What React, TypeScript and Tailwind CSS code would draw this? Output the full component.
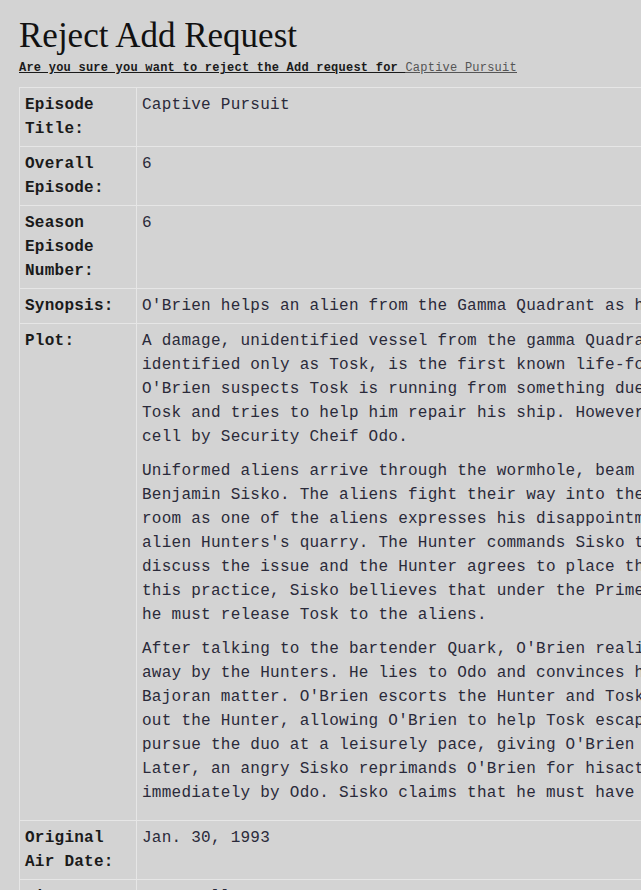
import React from "react";

const mono = { fontFamily: '"Liberation Mono", "DejaVu Sans Mono", monospace' };

const plot: string[][] = [
  [
    "A damage, unidentified vessel from the gamma Quadrant comes through the wormhole. Its pilot,",
    "identified only as Tosk, is the first known life-form to visit from the Gamma Quadrant. Chief",
    "O'Brien suspects Tosk is running from something due to his evasiveness. O'Brien befriends",
    "Tosk and tries to help him repair his ship. However, Tosk is caught and placed in a holding",
    "cell by Security Cheif Odo.",
  ],
  [
    "Uniformed aliens arrive through the wormhole, beam aboard the station and confront Commander",
    "Benjamin Sisko. The aliens fight their way into the security office and reach the holding",
    "room as one of the aliens expresses his disappointment that Tosk was caught. Tosk is the",
    "alien Hunters's quarry. The Hunter commands Sisko to return Tosk. Sisko and the Hunter",
    "discuss the issue and the Hunter agrees to place the matter in Sisko's hands. Despite hating",
    "this practice, Sisko bellieves that under the Prime Directive he cannot interfere and that",
    "he must release Tosk to the aliens.",
  ],
  [
    "After talking to the bartender Quark, O'Brien realizes that Tosk does not wish to be taken",
    "away by the Hunters. He lies to Odo and convinces him that the Hunters' presence is a",
    "Bajoran matter. O'Brien escorts the Hunter and Tosk to the docking ring, where he knocks",
    "out the Hunter, allowing O'Brien to help Tosk escape. The remaining Hunters then decide to",
    "pursue the duo at a leisurely pace, giving O'Brien time to get Tosk back to his ship.",
    "Later, an angry Sisko reprimands O'Brien for hisactions, while the Hunter is escorted away",
    "immediately by Odo. Sisko claims that he must have a word with O'Brien about the matter.",
  ],
];

function Row({ label, children }: { label: string; children: React.ReactNode }) {
  return (
    <tr>
      <th className="border border-[#e6e6e6] px-[5px] py-[5px] text-left align-top font-bold text-[#1a1a1a] w-[117px]">
        {label}
      </th>
      <td className="border border-[#e6e6e6] px-[5px] py-[5px] text-left align-top text-[#2a2a3a] whitespace-nowrap">
        {children}
      </td>
    </tr>
  );
}

export default function App() {
  return (
    <div className="min-h-screen w-full overflow-hidden bg-[#d3d3d3]">
      <div className="pl-[19px] pt-[14px]">
        <h1
          className="text-[35px] leading-[44px] text-[#111]"
          style={{ fontFamily: '"Liberation Serif", serif' }}
        >
          Reject Add Request
        </h1>
        <p
          className="mt-[2px] text-[12px] leading-[16px] font-bold tracking-[0.23px] text-[#1a1a1a] underline"
          style={mono}
        >
          Are you sure you want to reject the Add request for{" "}
          <a className="font-normal text-[#555] underline">Captive Pursuit</a>
        </p>
        <table
          className="mt-[11px] w-[1120px] border-collapse text-[16px] leading-[24px] tracking-[0.25px]"
          style={mono}
        >
          <tbody>
            <Row label="Episode Title:">Captive Pursuit</Row>
            <Row label="Overall Episode:">6</Row>
            <Row label="Season Episode Number:">6</Row>
            <Row label="Synopsis:">
              O'Brien helps an alien from the Gamma Quadrant as he flees from the hunters pursuing him.
            </Row>
            <Row label="Plot:">
              {plot.map((para, i) => (
                <p key={i} className="mb-[10px]">
                  {para.map((line, j) => (
                    <React.Fragment key={j}>
                      {line}
                      {j < para.length - 1 && <br />}
                    </React.Fragment>
                  ))}
                </p>
              ))}
            </Row>
            <Row label="Original Air Date:">Jan. 30, 1993</Row>
            <Row label="Director:">Corey Allen</Row>
          </tbody>
        </table>
      </div>
    </div>
  );
}
